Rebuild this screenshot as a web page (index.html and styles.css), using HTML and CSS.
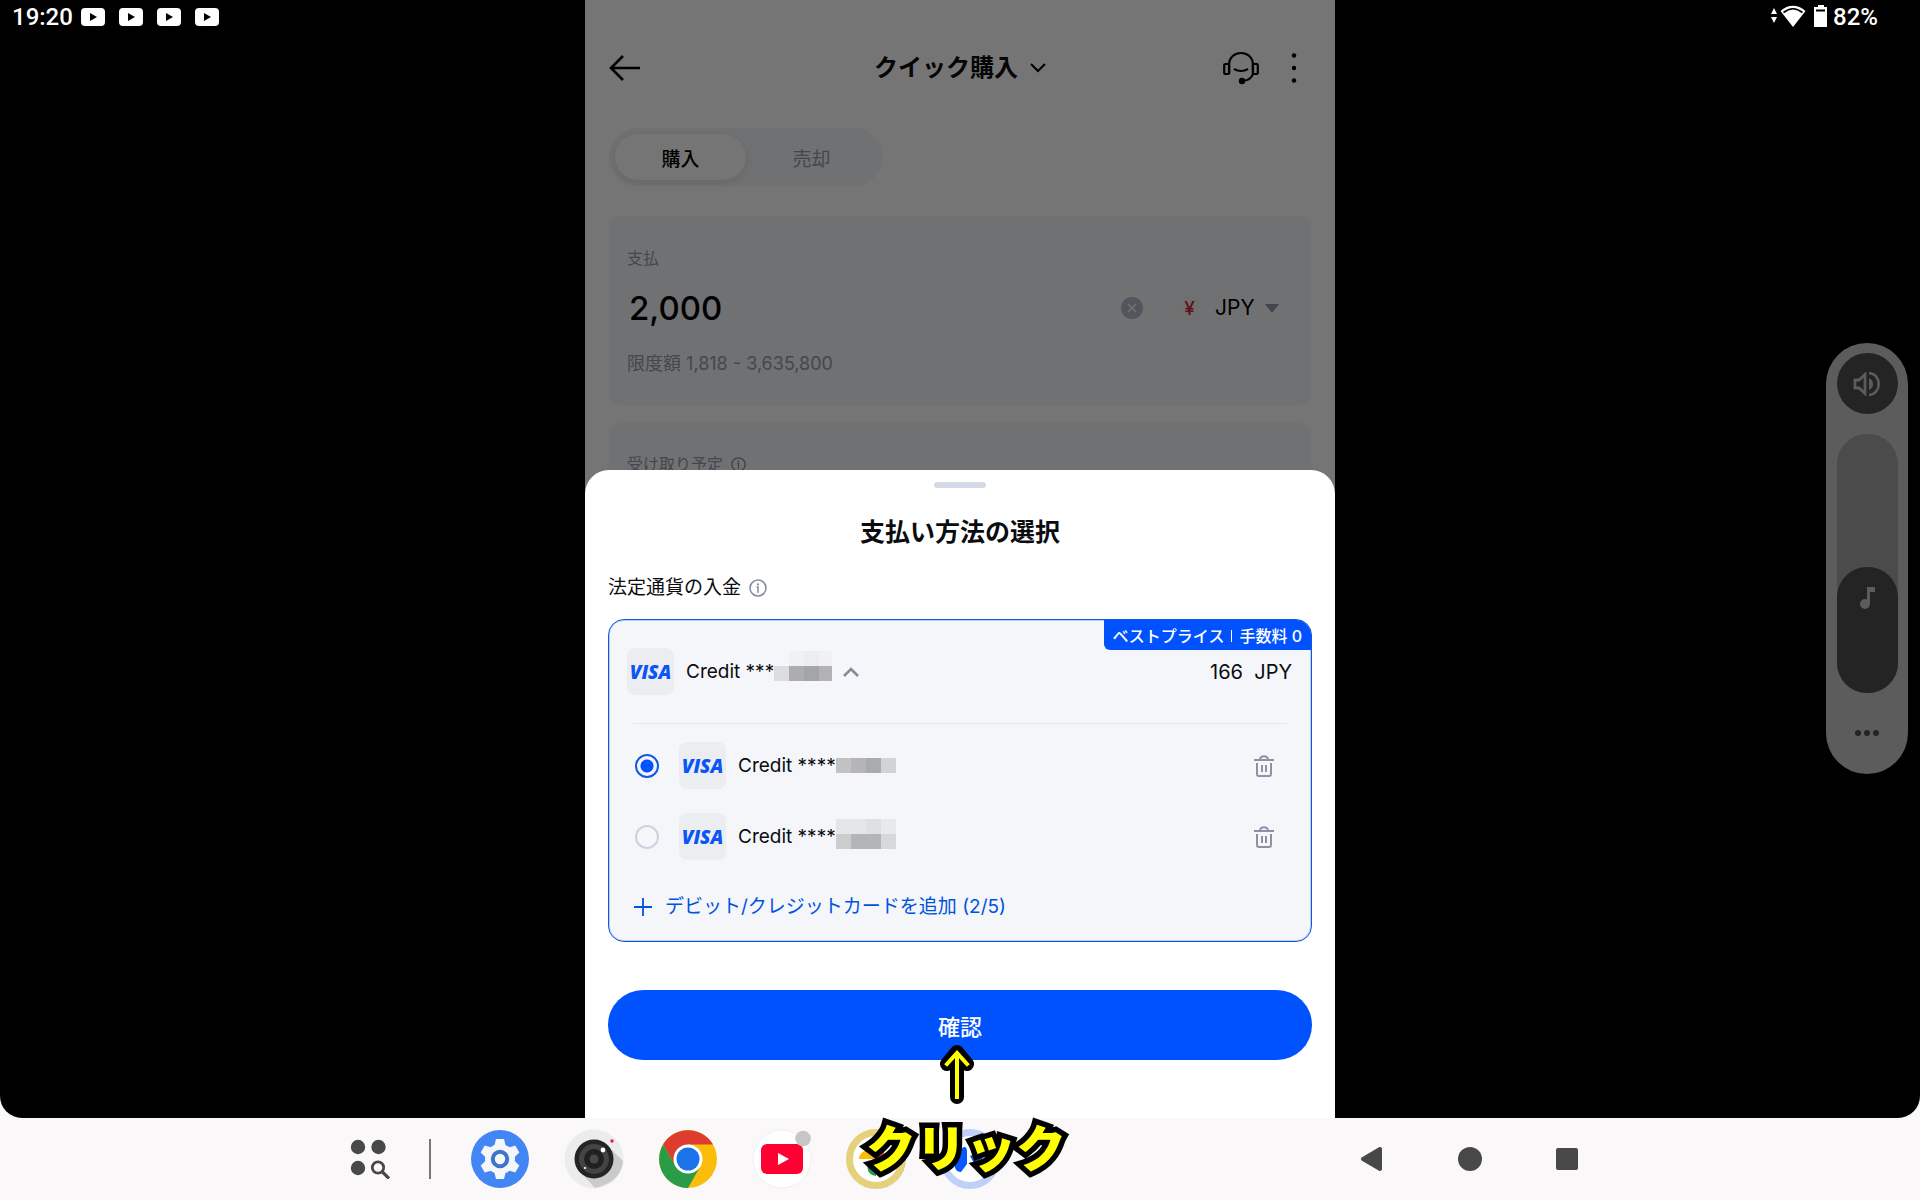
FILE: index.html
```html
<!DOCTYPE html>
<html lang="ja">
<head>
<meta charset="utf-8">
<meta name="viewport" content="width=device-width, initial-scale=1">
<title>クイック購入</title>
<link rel="stylesheet" href="styles.css">
</head>
<body>
<svg class="defs" aria-hidden="true">
  <symbol id="i-video" viewBox="0 0 24 18"><rect width="24" height="18" rx="4" fill="#fff"/><path d="M9 5l7 4-7 4z" fill="#000"/></symbol>
  <symbol id="i-trash" viewBox="0 0 20 22"><g fill="none" stroke="#8a92a3" stroke-width="2"><path d="M0 5h20M6 5c0-5 8-5 8 0M3 8v11q0 2 2 2h10q2 0 2-2V8"/><path d="M8 10v7M12 10v7"/></g></symbol>
  <symbol id="i-info" viewBox="0 0 18 18"><circle cx="9" cy="9" r="8" fill="none" stroke="#868da0" stroke-width="1.6"/><circle cx="9" cy="5.4" r="1.1" fill="#868da0"/><path d="M7.5 8H9v6" fill="none" stroke="#868da0" stroke-width="1.5"/></symbol>
</svg>

<div class="screen">
  <header class="status">
    <div class="status-side">
      <span>19:20</span>
      <div class="notes">
        <svg><use href="#i-video"/></svg><svg><use href="#i-video"/></svg><svg><use href="#i-video"/></svg><svg><use href="#i-video"/></svg>
      </div>
    </div>
    <div class="status-side">
      <svg class="signal" viewBox="0 0 56 24" width="56" height="24" fill="#fff"><path d="M0 9l3-6 3 6zM0 12h6l-3 6z"/><path d="M22 22L9.500 6C17-1 27-1 34.500 6z"/><path d="M12.500 7.500Q22 0 31.500 7.500" fill="none" stroke="#000" stroke-width="1.600"/><path d="M47 0h6v2h3v20H43V2h4z"/><path d="M45 5.500h9" stroke="#000" stroke-width="2"/></svg>
      <span>82%</span>
    </div>
  </header>

  <main class="app">
    <section class="page">
      <div class="topbar">
        <button class="icon" aria-label="戻る"><svg width="32" height="28" viewBox="0 0 32 28" fill="none" stroke="#000" stroke-width="2.600"><path d="M14 2L2 14l12 12M2 14h29"/></svg></button>
        <h1>クイック購入<svg width="16" height="10" viewBox="0 0 16 10" fill="none" stroke="#000" stroke-width="2"><path d="M1 1l7 7 7-7"/></svg></h1>
        <div class="tools">
          <button class="icon" aria-label="サポート"><svg width="36" height="34" viewBox="0 0 36 34" fill="none" stroke="#000" stroke-width="2.200"><path d="M6 23V14C6-2 30-2 30 14v9Q28 29 20 30"/><rect x="1.200" y="13" width="5" height="10" rx="1"/><rect x="29.800" y="13" width="5" height="10" rx="1"/><path d="M11 18q7 4 14 0"/><circle cx="19" cy="30" r="3.200" fill="#000" stroke="none"/></svg></button>
          <button class="icon" aria-label="メニュー"><svg width="6" height="32" viewBox="0 0 6 32"><circle cx="3" cy="3.500" r="2.200"/><circle cx="3" cy="16" r="2.200"/><circle cx="3" cy="28.500" r="2.200"/></svg></button>
        </div>
      </div>
      <div class="tabs"><button class="tab active">購入</button><button class="tab">売却</button></div>
      <div class="box">
        <label for="amount">支払</label>
        <div class="amount">
          <input id="amount" type="text" value="2,000">
          <button class="icon" aria-label="クリア"><svg width="22" height="22" viewBox="0 0 22 22"><circle cx="11" cy="11" r="11" fill="#b4bac6"/><path d="M7 7l8 8M15 7l-8 8" stroke="#f4f6fa" stroke-width="1.500"/></svg></button>
          <span class="yen">¥</span>
          <select aria-label="通貨"><option>JPY</option></select>
          <svg width="14" height="9" viewBox="0 0 14 9"><path d="M0 0h14L7 9z" fill="#9097a8"/></svg>
        </div>
        <p>限度額 1,818 - 3,635,800</p>
      </div>
      <div class="box next"><p>受け取り予定 <svg width="15" height="15"><use href="#i-info"/></svg></p></div>
      <div class="scrim"></div>
    </section>

    <section class="sheet">
      <div class="handle"></div>
      <h2>支払い方法の選択</h2>
      <h3>法定通貨の入金<svg width="18" height="18"><use href="#i-info"/></svg></h3>
      <div class="methods">
        <span class="badge">ベストプライス<i></i>手数料 0</span>
        <div class="row current">
          <span class="visa">VISA</span>
          <span>Credit ***</span>
          <svg class="mosaic" width="58" height="30" viewBox="0 0 58 30" shape-rendering="crispEdges"><path fill="#f0f1f4" d="M15 0h43v15H15z"/><path fill="#ecedf0" d="M30 0h15v15H30z"/><path fill="#dcdde0" d="M0 15h15v15H0z"/><path fill="#adadaf" d="M15 15h15v15H15z"/><path fill="#a4a5a7" d="M30 15h15v15H30z"/><path fill="#b3b3b5" d="M45 15h13v15H45z"/></svg>
          <svg class="up" width="16" height="10" viewBox="0 0 16 10" fill="none" stroke="#858b9b" stroke-width="2.600"><path d="M1 9l7-7 7 7"/></svg>
          <span class="fee">166&nbsp; JPY</span>
        </div>
        <div class="row">
          <input type="radio" name="card" id="card1" checked>
          <label for="card1"><span class="visa">VISA</span>Credit ****</label>
          <svg class="mosaic" width="60" height="16" viewBox="0 0 60 16" shape-rendering="crispEdges"><path fill="#c1c2c4" d="M0 0h15v15H0z"/><path fill="#b5b5b7" d="M15 0h15v15H15z"/><path fill="#aaabad" d="M30 0h15v15H30z"/><path fill="#d2d3d6" d="M45 0h15v15H45z"/></svg>
          <button class="icon del" aria-label="削除"><svg width="20" height="22"><use href="#i-trash"/></svg></button>
        </div>
        <div class="row">
          <input type="radio" name="card" id="card2">
          <label for="card2"><span class="visa">VISA</span>Credit ****</label>
          <svg class="mosaic" width="60" height="36" viewBox="0 0 60 36" shape-rendering="crispEdges"><path fill="#e5e6e9" d="M0 0h30v15H0z"/><path fill="#dfe0e3" d="M30 0h15v15H30z"/><path fill="#e8e9ec" d="M45 0h15v15H45z"/><path fill="#cbccce" d="M0 15h15v15H0z"/><path fill="#b4b5b7" d="M15 15h30v15H15z"/><path fill="#d7d8db" d="M45 15h15v15H45z"/></svg>
          <button class="icon del" aria-label="削除"><svg width="20" height="22"><use href="#i-trash"/></svg></button>
        </div>
        <a class="add" href="#add"><svg width="18" height="18" viewBox="0 0 18 18" stroke="#0052e0" stroke-width="1.800"><path d="M9 0v18M0 9h18"/></svg>デビット/クレジットカードを追加 (2/5)</a>
      </div>
      <button class="confirm">確認</button>
    </section>
  </main>

  <aside class="volume">
    <button class="mute" aria-label="ミュート"><svg width="28" height="26" viewBox="0 0 28 26"><path d="M2 9h4l6-5.500v19L6 17H2z" fill="none" stroke="#5c5c5c" stroke-width="2.800"/><path d="M16 7v12q4-2 4-6t-4-6z" fill="#5c5c5c"/><path d="M16 2c13 1 13 21 0 22" fill="none" stroke="#5c5c5c" stroke-width="2.600"/></svg></button>
    <div class="level">
      <input type="range" aria-label="メディアの音量" min="0" max="100" value="0">
      <svg class="note" width="16" height="22" viewBox="0 0 16 22" fill="#5c5c5c"><circle cx="5" cy="17" r="5"/><path d="M7 0h8v5h-5v12H7z"/></svg>
    </div>
    <button class="icon more" aria-label="その他"><svg width="24" height="6" viewBox="0 0 24 6" fill="#242424"><circle cx="3" cy="3" r="3"/><circle cx="12" cy="3" r="3"/><circle cx="21" cy="3" r="3"/></svg></button>
  </aside>
</div>

<nav class="dock">
  <div class="apps">
    <button class="icon" aria-label="アプリ一覧"><svg width="40" height="40" viewBox="0 0 40 40" fill="#484848"><circle cx="8" cy="8" r="7.200"/><circle cx="28.500" cy="8" r="7.200"/><circle cx="8" cy="29" r="7.200"/><circle cx="28" cy="28.500" r="5.700" fill="none" stroke="#484848" stroke-width="2.800"/><path d="M32 32.500l7 7" stroke="#484848" stroke-width="3.200"/></svg></button>
    <span class="bar"></span>
    <button class="icon" aria-label="設定"><svg width="60" height="60" viewBox="-30 -30 60 60"><circle r="29" fill="#4285f4"/><g fill="#f5f6f7"><circle r="15"/><path d="M-6-12l2-8h8l2 8z"/><path d="M-6-12l2-8h8l2 8z" transform="rotate(60)"/><path d="M-6-12l2-8h8l2 8z" transform="rotate(120)"/><path d="M-6-12l2-8h8l2 8z" transform="rotate(180)"/><path d="M-6-12l2-8h8l2 8z" transform="rotate(240)"/><path d="M-6-12l2-8h8l2 8z" transform="rotate(300)"/></g><circle r="7.200" fill="#f5f6f7" stroke="#3f73cc" stroke-width="4"/></svg></button>
    <button class="icon" aria-label="カメラ"><svg width="60" height="60" viewBox="-30 -30 60 60"><circle r="29.500" fill="#ececec"/><path d="M18-9L29 2Q27 23 1 29L-10 17z" fill="#cacaca"/><circle r="19.500" fill="#242424"/><circle r="15" fill="#444"/><circle r="10" fill="#202020"/><circle r="4.500" fill="#484848"/><circle cx="9" cy="-9" r="2.400" fill="#fff"/><circle cx="-9" cy="9" r="1.100" fill="#fff"/><circle cx="18" cy="-18" r="1.700" fill="#e91e4f"/></svg></button>
    <button class="icon" aria-label="Chrome"><svg width="60" height="60" viewBox="-30 -30 60 60"><circle r="29" fill="#fbbd0b"/><path d="M-25-14.500A29 29 0 0 1 25-14.500H0L-12.500 7z" fill="#dd3c2e"/><path d="M-25-14.500A29 29 0 0 0 0 29L12.500 7H-12.500z" fill="#2a9c48"/><circle r="14.500" fill="#fff"/><circle r="11.500" fill="#1a73e8"/></svg></button>
    <button class="icon" aria-label="YouTube"><svg width="60" height="60" viewBox="-30 -30 60 60"><circle r="29" fill="#fff" stroke="#f0eeef"/><rect x="-21" y="-15" width="42" height="30" rx="6" fill="#f03"/><path d="M-4-6L7 0-4 6z" fill="#fff"/><circle cx="21" cy="-20.500" r="7.800" fill="#c6c6c6"/></svg></button>
    <button class="icon" aria-label="フォト"><svg width="60" height="60" viewBox="-30 -30 60 60"><circle r="26.500" fill="#fff" stroke="#e5d07b" stroke-width="7"/><path d="M-17 0a8.500 8.500 0 0 1 17 0z" fill="#fbbc04"/><path d="M0-17a8.500 8.500 0 0 1 0 17z" fill="#ea4335"/><path d="M17 0a8.500 8.500 0 0 1-17 0z" fill="#4285f4"/><path d="M0 17a8.500 8.500 0 0 1 0-17z" fill="#16a05a"/></svg></button>
    <button class="icon" aria-label="ウォレット"><svg width="60" height="60" viewBox="-30 -30 60 60"><circle r="26.500" fill="#fff" stroke="#c0d0f8" stroke-width="7"/><path d="M-15 2L-8-11q5-3 5 4v12l-6 8q-8 0-6-13z" fill="#0757ff"/><path d="M0-3L12-8v8L4 4z" fill="#0757ff"/></svg></button>
  </div>
  <div class="keys">
    <button class="icon" aria-label="戻る"><svg width="24" height="26" viewBox="0 0 24 26"><path d="M3 13L20 3v20z" fill="#484848" stroke="#484848" stroke-width="4" stroke-linejoin="round"/></svg></button>
    <button class="icon" aria-label="ホーム"><svg width="24" height="24"><circle cx="12" cy="12" r="12" fill="#484848"/></svg></button>
    <button class="icon" aria-label="履歴"><svg width="22" height="22"><rect width="22" height="22" rx="2" fill="#484848"/></svg></button>
  </div>
</nav>

<div class="callout">
  <svg width="36" height="60" viewBox="0 0 36 60" fill="none" stroke-linecap="square"><path d="M18 12v41M8 20L18 8l10 12" stroke="#000" stroke-width="14" stroke-linejoin="round" stroke-linecap="round"/><path d="M18 10v43M8 20L18 9l10 11" stroke="#ff0" stroke-width="4"/></svg>
  <span>クリック</span>
</div>
</body>
</html>
```
FILE: styles.css
```css
* { box-sizing: border-box; }
body {
  margin: 0;
  min-height: 100vh;
  display: flex;
  flex-direction: column;
  position: relative;
  background: #fbf8fa;
  color: #0b0c0f;
  font-family: Inter, "Noto Sans CJK JP", sans-serif;
}
h1, h2, h3, p { margin: 0; }
button, input, select { font: inherit; color: inherit; border: 0; padding: 0; margin: 0; background: none; }
svg { display: block; flex: none; }
.defs { position: absolute; width: 0; height: 0; }
.icon { display: block; }

.screen {
  flex: 1;
  display: flex;
  justify-content: center;
  position: relative;
  background: #000;
  border-radius: 0 0 22px 22px;
}

/* status bar over the app */
.status {
  position: absolute;
  z-index: 2;
  inset: 0 0 auto;
  display: flex;
  justify-content: space-between;
  padding: 0 42px 0 12px;
  font: 500 24px/34px Roboto, sans-serif;
  color: #fff;
}
.status-side { display: flex; align-items: center; gap: 8px; }
.notes { display: flex; gap: 14px; }
.notes svg { width: 24px; height: 18px; }
.status-side:last-child { gap: 6px; }

/* app column: page and sheet share one cell */
.app { display: grid; grid-template-columns: minmax(0, 1fr); width: 100%; max-width: 750px; }
.page, .sheet { grid-area: 1 / 1; }
.page { position: relative; background: #fff; padding: 40px 24px 0; max-height: 500px; }
.scrim { position: absolute; inset: 0; background: rgba(0, 0, 0, .54); }
.topbar { display: grid; grid-template-columns: 1fr auto 1fr; align-items: center; height: 56px; }
.topbar h1 { display: flex; align-items: center; gap: 12px; font-size: 24px; line-height: 36px; font-weight: 700; }
.tools { display: flex; justify-content: flex-end; align-items: center; gap: 32px; padding-right: 14px; }
.tabs { display: flex; width: 274px; margin-top: 32px; padding: 6px; border-radius: 29px; background: #f4f6fa; }
.tab { flex: 1; height: 46px; border-radius: 23px; font-size: 19px; color: #949bab; }
.tab.active { background: #fff; color: #000; font-weight: 500; box-shadow: 0 2px 12px rgba(0, 0, 0, .1); }
.box { margin-top: 30px; padding: 28px 32px 33px 18px; border-radius: 10px; background: #f4f6fa; font-size: 16px; line-height: 28px; color: #949bab; }
.box label { display: block; }
.amount { display: flex; align-items: center; margin: 9px 0 21px; height: 54px; color: #000; }
.amount input { flex: 1; min-width: 0; height: 48px; padding-left: 2px; font-size: 33px; font-weight: 500; }
.amount select { appearance: none; margin: 0 10px 0 13px; font-size: 21px; }
.yen { margin-left: 34px; width: 25px; border-radius: 50%; background: #f7f3f4; text-align: center; font-size: 19px; line-height: 25px; font-weight: 500; color: #d81e46; }
.box p { display: flex; align-items: center; gap: 8px; font-size: 18px; line-height: 16px; }
.box.next { margin-top: 18px; height: 80px; padding-top: 33px; }
.box.next p { font-size: 16px; }

.sheet {
  position: relative;
  align-self: end;
  padding: 12px 23px 58px;
  border-radius: 24px 24px 0 0;
  background: #fff;
}
.handle { width: 52px; height: 6px; margin: 0 auto 26px; border-radius: 3px; background: #d5dbe6; }
.sheet h2 { text-align: center; font-size: 25px; line-height: 36px; font-weight: 700; }
.sheet h3 { display: flex; align-items: center; gap: 8px; margin: 24px 0 17px; font-size: 19px; line-height: 28px; font-weight: 400; }
.methods {
  position: relative;
  padding: 28px 17px 20px;
  border: 1px solid #0f58d8;
  border-radius: 16px;
  background: #f4f6fa;
  box-shadow: inset 0 0 0 1px #b4d0fb;
  font-size: 19px;
  line-height: 28px;
}
.badge {
  position: absolute;
  top: 0;
  right: 0;
  display: flex;
  align-items: center;
  padding: 1px 9px 0;
  height: 30px;
  border-radius: 0 15px 0 6px;
  background: #0052ff;
  color: #fff;
  font-size: 16px;
  font-weight: 500;
}
.badge i { width: 1px; height: 12px; margin: 0 7px; background: #fff; }
.row { display: flex; align-items: center; height: 47px; margin: 0 20px 24px 9px; }
.row.current { height: 76px; margin: 0 7px 18px; padding-bottom: 28px; border-bottom: 1px solid #e6e8ec; }
.row label { display: flex; align-items: center; }
.visa {
  display: grid;
  place-items: center;
  width: 47px;
  height: 47px;
  margin-right: 12px;
  border-radius: 8px;
  background: #ecedf1;
  color: #0a55f5;
  font: italic 800 19px/20px "Open Sans", sans-serif;
}
.current .visa { margin-left: -6px; }
.current .mosaic { margin-bottom: 12px; }
.up { margin-left: 11px; }
.fee { margin: 0 -5px 0 auto; font-size: 20px; }
.row input {
  appearance: none;
  width: 24px;
  height: 24px;
  margin-right: 20px;
  border: 2px solid #cdd2de;
  border-radius: 50%;
}
.row input:checked { border-color: #0f58e8; background: radial-gradient(circle, #0052ff 6px, transparent 7px); }
.del { margin-left: auto; }
.add { display: flex; align-items: center; gap: 13px; margin: 33px 8px 0; color: #0052e0; text-decoration: none; }
.confirm { display: block; width: 100%; height: 70px; margin-top: 48px; border-radius: 35px; background: #0052ff; color: #fff; font-size: 22px; font-weight: 500; }

/* floating volume panel */
.volume {
  position: absolute;
  top: 343px;
  right: 12px;
  display: flex;
  flex-direction: column;
  align-items: center;
  width: 82px;
  padding: 10px 0 38px;
  border-radius: 41px;
  background: #5c5c5c;
}
.mute { display: grid; place-items: center; width: 61px; height: 61px; border-radius: 50%; background: #242424; }
.level { position: relative; margin: 20px 0 37px; }
.level input {
  display: block;
  appearance: none;
  writing-mode: vertical-lr;
  direction: rtl;
  width: 61px;
  height: 259px;
  border-radius: 30px;
  background: #4b4b4b;
}
.level input::-webkit-slider-thumb { appearance: none; width: 61px; height: 126px; border-radius: 30px; background: #242424; }
.note { position: absolute; left: 23px; top: 153px; pointer-events: none; }

.dock { display: flex; align-items: center; justify-content: space-between; height: 82px; padding: 0 342px 0 350px; }
.apps { display: flex; align-items: center; gap: 34px; }
.apps .bar { width: 2px; height: 40px; margin: 0 5px; background: #777; }
.keys { display: flex; align-items: center; gap: 74px; }

/* pointer note drawn over the screen */
.callout {
  position: absolute;
  left: 50%;
  bottom: 14px;
  margin-left: -97px;
  display: flex;
  flex-direction: column;
  align-items: center;
  width: 206px;
  pointer-events: none;
}
.callout svg { margin-right: 18px; }
.callout span {
  font: 900 50px/82px "Noto Sans CJK JP", sans-serif;
  color: #ff0;
  -webkit-text-stroke: 11px #000;
  paint-order: stroke fill;
  stroke-linejoin: round;
}
```
